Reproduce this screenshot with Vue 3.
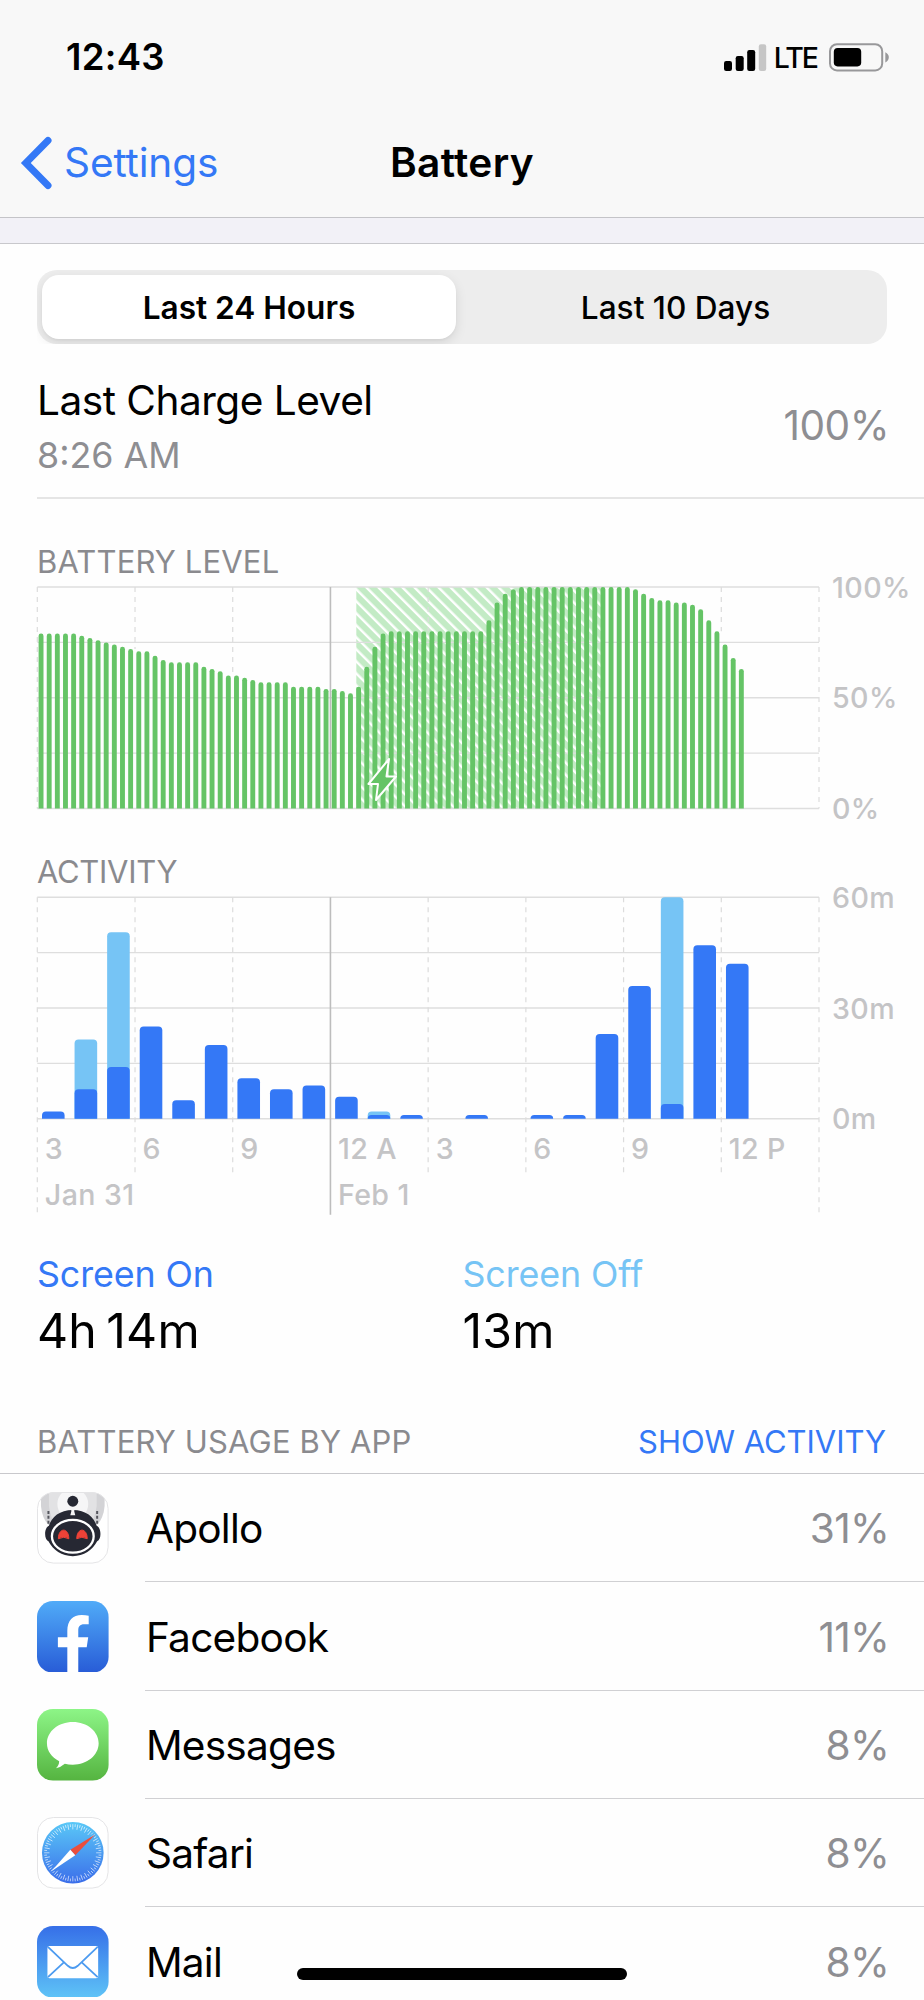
<script setup>
import { ref, computed } from 'vue'

const tabs = ['Last 24 Hours', 'Last 10 Days']
const activeTab = ref(0)

// battery percentage, one sample per quarter of an hour
const levels = [
  79, 79, 79, 79, 79, 78, 77, 76, 75, 74, 73, 72, 71, 71, 69, 67, 66, 66, 66, 66,
  64, 63, 62, 60, 60, 59, 58, 57, 57, 57, 57, 55, 55, 55, 55, 54, 54, 53, 52, 55,
  64, 73, 79, 80, 80, 80, 80, 80, 80, 80, 80, 80, 80, 80, 80, 85, 93, 97, 99, 100,
  100, 100, 100, 100, 100, 100, 100, 100, 100, 100, 100, 100, 100, 99, 97, 95, 94, 94, 93, 93,
  92, 90, 85, 80, 74, 68, 63,
]

// minutes per hour
const activity = [
  { on: 2, off: 0 }, { on: 8, off: 13.5 }, { on: 14, off: 36.5 }, { on: 25, off: 0 },
  { on: 5, off: 0 }, { on: 20, off: 0 }, { on: 11, off: 0 }, { on: 8, off: 0 },
  { on: 9, off: 0 }, { on: 6, off: 0 }, { on: 1, off: 1 }, { on: 1, off: 0 },
  { on: 0, off: 0 }, { on: 1, off: 0 }, { on: 0, off: 0 }, { on: 1, off: 0 },
  { on: 1, off: 0 }, { on: 23, off: 0 }, { on: 36, off: 0 }, { on: 4, off: 56 },
  { on: 47, off: 0 }, { on: 42, off: 0 },
]

const left = 37.3
const right = 819
const step = (right - left) / 8
const plotHeight = 221.5

const hourLabels = ['3', '6', '9', '12 A', '3', '6', '9', '12 P']
const verticals = Array.from({ length: 9 }, (_, i) => left + i * step)
const horizontals = [0, 1, 2, 3, 4].map((i) => (i * plotHeight) / 4)

// dashed lines stop where the level bars begin, outer ones and midnight run through
function verticalEnd(i) {
  if (i === 0 || i === 3 || i === 8) return plotHeight
  return plotHeight * (1 - levels[i * 12 - 1] / 100)
}

// bar with a rounded top and a flat foot
function barPath(x, w, h, r) {
  const k = Math.min(r, h)
  const top = plotHeight - h
  return `M${x} ${plotHeight}V${top + k}Q${x} ${top} ${x + k} ${top}H${x + w - k}Q${x + w} ${top} ${x + w} ${top + k}V${plotHeight}Z`
}

const levelBars = computed(() =>
  levels.map((v, i) => barPath(38.6 + i * 8.143, 4.9, (v / 100) * plotHeight, 2.4))
)

const activityBars = computed(() =>
  activity.map((a, i) => {
    const x = 42 + i * 32.57
    return {
      total: a.off ? barPath(x, 22.6, ((a.on + a.off) / 60) * plotHeight, 4) : '',
      on: a.on ? barPath(x, 22.6, (a.on / 60) * plotHeight, 4) : '',
    }
  })
)

const apps = [
  { id: 'apollo', name: 'Apollo', share: '31%' },
  { id: 'facebook', name: 'Facebook', share: '11%' },
  { id: 'messages', name: 'Messages', share: '8%' },
  { id: 'safari', name: 'Safari', share: '8%' },
  { id: 'mail', name: 'Mail', share: '8%' },
]

const ticks = Array.from({ length: 72 }, (_, i) => i * 5)
</script>

<template>
  <div class="screen">
    <header>
      <div class="status">
        <span class="time">12:43</span>
        <div class="status-right">
          <svg class="signal" width="43" height="27" viewBox="0 0 43 27">
            <rect x="0" y="17" width="8" height="10" rx="2.2" />
            <rect x="11.7" y="12" width="8" height="15" rx="2.2" />
            <rect x="23.2" y="6" width="8" height="21" rx="2.2" />
            <rect x="34.8" y="0.3" width="7.4" height="26.7" rx="2.2" fill="#c6c6c6" />
          </svg>
          <span class="lte">LTE</span>
          <svg class="cell" width="61" height="29" viewBox="0 0 61 29">
            <rect x="1" y="1.2" width="52.2" height="26.2" rx="7" fill="none" stroke="#98989a" stroke-width="2" />
            <rect x="4.8" y="5" width="27.4" height="18.4" rx="3.8" />
            <path d="M56.3 9.3C61 11.5 61 17.3 56.3 19.5Z" fill="#98989a" />
          </svg>
        </div>
      </div>
      <nav>
        <button class="back">
          <svg width="32" height="54" viewBox="0 0 32 54">
            <path d="M28 4.500L5.800 27L28 49.500" fill="none" stroke="#3478f6" stroke-width="7" stroke-linecap="round" />
          </svg>
          <span>Settings</span>
        </button>
        <h1>Battery</h1>
      </nav>
    </header>
    <div class="gap"></div>

    <main>
      <div class="segmented">
        <button
          v-for="(tab, i) in tabs"
          :key="tab"
          :class="{ active: i === activeTab }"
          @click="activeTab = i"
        >{{ tab }}</button>
      </div>

      <section class="charge">
        <div>
          <p class="charge-title">Last Charge Level</p>
          <p class="charge-time">8:26 AM</p>
        </div>
        <span class="charge-value">100%</span>
      </section>

      <h2 class="level-title">BATTERY LEVEL</h2>
      <svg class="chart level-chart" width="924" height="272" viewBox="0 -6 924 272">
        <defs>
          <pattern id="hatch" width="8.500" height="8.500" patternUnits="userSpaceOnUse" patternTransform="translate(356.300 4) rotate(-45)">
            <rect width="8.500" height="8.500" fill="#c3ebc5" />
            <rect width="2.400" height="8.500" fill="#fff" />
          </pattern>
        </defs>
        <rect x="356.3" y="0" width="244.500" :height="plotHeight" fill="url(#hatch)" />
        <line v-for="y in horizontals" :key="y" :x1="left" :x2="right" :y1="y" :y2="y" class="grid" />
        <line
          v-for="(x, i) in verticals" :key="x"
          :x1="x" :x2="x" y1="0" :y2="verticalEnd(i)"
          :class="i === 3 ? 'midnight' : 'dashed'"
        />
        <path v-for="(d, i) in levelBars" :key="i" :d="d" fill="#65c466" />
        <path
          d="M389 172L368.500 197H378L376 213L396 189.500H386.500Z"
          fill="#65c466" stroke="#fff" stroke-width="2" stroke-linejoin="round"
        />
        <text x="832" y="10.5" class="axis">100%</text>
        <text x="832" y="121.3" class="axis">50%</text>
        <text x="832" y="232" class="axis">0%</text>
      </svg>

      <h2 class="activity-title">ACTIVITY</h2>
      <svg class="chart" width="924" height="356" viewBox="0 -6.300 924 356">
        <line v-for="y in horizontals" :key="y" :x1="left" :x2="right" :y1="y" :y2="y" class="grid" />
        <line
          v-for="(x, i) in verticals" :key="x"
          :x1="x" :x2="x" y1="0"
          :y2="i === 0 || i === 3 || i === 8 ? 317.5 : 276.5"
          :class="i === 3 ? 'midnight' : 'dashed'"
        />
        <g v-for="(bar, i) in activityBars" :key="i">
          <path :d="bar.total" fill="#76c4f5" />
          <path :d="bar.on" fill="#3478f6" />
        </g>
        <text v-for="(label, i) in hourLabels" :key="i" :x="verticals[i] + 7.5" y="261.900" class="axis">{{ label }}</text>
        <text :x="verticals[0] + 7.5" y="307.300" class="axis">Jan 31</text>
        <text :x="verticals[3] + 7.5" y="307.300" class="axis">Feb 1</text>
        <text x="832" y="10.5" class="axis">60m</text>
        <text x="832" y="121.3" class="axis">30m</text>
        <text x="832" y="232" class="axis">0m</text>
      </svg>

      <section class="totals">
        <div>
          <p class="total-label on">Screen On</p>
          <p class="total-value">4h 14m</p>
        </div>
        <div>
          <p class="total-label off">Screen Off</p>
          <p class="total-value">13m</p>
        </div>
      </section>

      <div class="usage-head">
        <h2>BATTERY USAGE BY APP</h2>
        <button>SHOW ACTIVITY</button>
      </div>

      <ul class="apps">
        <li v-for="app in apps" :key="app.id">
          <svg v-if="app.id === 'apollo'" class="icon" viewBox="0 0 72 72">
            <defs>
              <clipPath id="tile"><rect x="0.500" y="0.500" width="71" height="71" rx="16" /></clipPath>
            </defs>
            <rect x="0.500" y="0.500" width="71" height="71" rx="16" fill="#fff" />
            <g clip-path="url(#tile)">
              <path d="M4 0H68V14Q67 26 60.500 33H11.500Q5 26 4 14Z" fill="#d3d3d6" />
              <path d="M12 0H60V14Q58 30 50 36H22Q14 30 12 14Z" fill="#e2e2e4" />
              <circle cx="36" cy="12" r="15.500" fill="#f6f6f7" />
              <path d="M11.500 19V34M60.500 19V34" stroke="#55565e" stroke-width="2" stroke-dasharray="3 2" />
            </g>
            <circle cx="36" cy="9.300" r="5.500" fill="#262833" />
            <path d="M36 18C49 18 57.500 25 60 34C65 36 65 48 60.500 49.500C56 58 47 64.500 36 64.500S16 58 11.500 49.500C7 48 7 36 12 34C14.500 25 23 18 36 18Z" fill="#262833" />
            <path d="M34.500 17H37.500V19.500L38.500 23.500H33.500L34.500 19.500Z" fill="#f6f6f7" />
            <ellipse cx="36" cy="44.500" rx="21" ry="16.500" fill="#262833" stroke="#fff" stroke-width="2.300" />
            <path d="M21.500 47C21.500 35.500 32 35.500 32 47Q27 44 21.500 47Z" fill="#ee4237" stroke="#ee4237" />
            <path d="M40 47C40 35.500 50.500 35.500 50.500 47Q45 44 40 47Z" fill="#ee4237" stroke="#ee4237" />
            <rect x="0.500" y="0.500" width="71" height="71" rx="16" fill="none" stroke="#e4e4e6" />
          </svg>

          <svg v-else-if="app.id === 'facebook'" class="icon" viewBox="0 0 72 72">
            <defs>
              <linearGradient id="fb" x2="0" y2="1">
                <stop offset="0" stop-color="#50abf8" />
                <stop offset="1" stop-color="#285cd7" />
              </linearGradient>
            </defs>
            <rect width="72" height="72" rx="16" fill="url(#fb)" />
            <path d="M30.500 72V46.500H21V36.500H30.500V30C30.500 19.500 36 14 45 14Q49 14 52 14.800V23.500H47.500C43 23.500 41.500 26 41.500 29.500V36.500H51.500L50 46.500H41.500V72Z" fill="#fff" />
          </svg>

          <svg v-else-if="app.id === 'messages'" class="icon" viewBox="0 0 72 72">
            <defs>
              <linearGradient id="msg" x2="0" y2="1">
                <stop offset="0" stop-color="#8df587" />
                <stop offset="1" stop-color="#55b440" />
              </linearGradient>
            </defs>
            <rect width="72" height="72" rx="16" fill="url(#msg)" />
            <path d="M36 13C50.500 13 62 22.500 62 34.500S50.500 56 36 56Q31.500 56 28 55Q24 58.500 19 59.500Q22.300 56.500 22.300 52.500C14.500 48.500 10 42 10 34.500C10 22.500 21.500 13 36 13Z" fill="#fff" />
          </svg>

          <svg v-else-if="app.id === 'safari'" class="icon" viewBox="0 0 72 72">
            <defs>
              <linearGradient id="saf" x2="0" y2="1">
                <stop offset="0" stop-color="#5ac8f7" />
                <stop offset="1" stop-color="#3b6eea" />
              </linearGradient>
            </defs>
            <rect x="0.500" y="0.500" width="71" height="71" rx="16" fill="#fff" stroke="#e4e4e6" />
            <circle cx="36" cy="36" r="31" fill="url(#saf)" />
            <line
              v-for="(a, i) in ticks" :key="a"
              x1="36" y1="7.200" x2="36" :y2="i % 2 ? 10 : 12.500"
              :transform="`rotate(${a} 36 36)`"
              stroke="#fff" stroke-opacity="0.750" stroke-width="0.800"
            />
            <path d="M58.500 17.500L33.500 33L38.500 38.500Z" fill="#ea4e3d" />
            <path d="M14.500 54.500L33.500 33L38.500 38.500Z" fill="#fff" />
          </svg>

          <svg v-else class="icon" viewBox="0 0 72 72">
            <defs>
              <linearGradient id="mail" x2="0" y2="1">
                <stop offset="0" stop-color="#366fe8" />
                <stop offset="1" stop-color="#5ec3f7" />
              </linearGradient>
            </defs>
            <rect width="72" height="72" rx="16" fill="url(#mail)" />
            <rect x="10.500" y="20" width="51" height="32.500" rx="2" fill="#fff" />
            <path d="M11 21L31 40Q36 44.500 41 40L61 21M11 51.500L27 36.500M61 51.500L45 36.500" fill="none" stroke="#4c9bf0" stroke-width="1.800" />
          </svg>

          <div class="row">
            <span class="name">{{ app.name }}</span>
            <span class="share">{{ app.share }}</span>
          </div>
        </li>
      </ul>
    </main>
    <div class="home-bar"></div>
  </div>
</template>

<style>
body {
  margin: 0;
  background: #fefefe;
}
</style>

<style scoped>
.screen {
  position: relative;
  width: 924px;
  height: 2000px;
  overflow: hidden;
  background: #fefefe;
  color: #000;
  font-family: Inter, "Liberation Sans", sans-serif;
}
p, h1, h2, ul {
  margin: 0;
  padding: 0;
}
button {
  border: none;
  background: none;
  padding: 0;
  font: inherit;
  color: inherit;
  cursor: pointer;
}
header {
  height: 217px;
  background: #f8f8f8;
  border-bottom: 1px solid #c4c4c8;
}
.status {
  display: flex;
  justify-content: space-between;
  align-items: center;
  height: 114px;
  padding: 0 34px 0 66px;
}
.time {
  font-size: 36.5px;
  font-weight: 600;
  letter-spacing: 0.3px;
}
.status-right {
  display: flex;
  align-items: center;
}
.lte {
  margin: 0 12px 0 7px;
  font-size: 28.5px;
  font-weight: 500;
  letter-spacing: -2px;
}
nav {
  display: grid;
  grid-template-columns: 1fr auto 1fr;
  align-items: center;
  height: 97px;
  padding: 0 20px;
}
.back {
  display: flex;
  align-items: center;
  gap: 12px;
  color: #3478f6;
  font-size: 40.6px;
  letter-spacing: -0.15px;
}
h1 {
  font-size: 40.6px;
  font-weight: 600;
  letter-spacing: 0.35px;
}
nav::after {
  content: "";
}
.gap {
  height: 25px;
  background: #f2f1f7;
  border-bottom: 1px solid #c8c8cc;
}
.segmented {
  display: grid;
  grid-template-columns: 414px 1fr;
  column-gap: 13px;
  height: 64px;
  margin: 26px 37px 0;
  padding: 5px;
  border-radius: 20px;
  background: #ededed;
}
.segmented button {
  border-radius: 17px;
  font-size: 31.6px;
  font-weight: 500;
}
.segmented .active {
  background: #fff;
  font-weight: 600;
  box-shadow: 0 4px 12px rgba(0, 0, 0, 0.1), 0 2px 2px rgba(0, 0, 0, 0.03);
  clip-path: inset(-5px -20px -5px -5px);
}
.charge {
  display: flex;
  justify-content: space-between;
  align-items: center;
  height: 140px;
  margin-left: 37px;
  padding: 13px 35px 0 0;
  border-bottom: 2px solid #e5e5e5;
}
.charge p {
  line-height: 54px;
}
.charge-title {
  padding-top: 1px;
  font-size: 40.6px;
  letter-spacing: -0.5px;
}
.charge-time {
  font-size: 35.8px;
  color: #8e8e92;
}
.charge-value {
  margin-bottom: 3px;
  font-size: 40.6px;
  letter-spacing: -0.5px;
  color: #8e8e92;
}
h2 {
  margin-left: 37px;
  font-size: 31px;
  font-weight: 400;
  line-height: 38px;
  letter-spacing: 0.15px;
  color: #8a8a8e;
}
.level-title {
  margin-top: 44px;
}
.activity-title {
  letter-spacing: -0.3px;
}
.chart {
  display: block;
  overflow: visible;
}
.grid {
  stroke: #dedede;
  stroke-width: 1.4;
}
.dashed {
  stroke: #dcdcdc;
  stroke-width: 1.2;
  stroke-dasharray: 5 5;
}
.midnight {
  stroke: #bdbdbd;
  stroke-width: 1.6;
}
.axis {
  font-size: 28.6px;
  font-weight: 500;
  letter-spacing: 0.4px;
  fill: #c4c4c6;
}
.totals {
  display: grid;
  grid-template-columns: 425.5px 1fr;
  padding-left: 37px;
}
.total-label {
  font-size: 35.8px;
  line-height: 55px;
  letter-spacing: -0.1px;
}
.total-label.on {
  color: #3478f6;
}
.total-label.off {
  color: #76c4f5;
}
.total-value {
  font-size: 48.2px;
  line-height: 57px;
  letter-spacing: 0.2px;
  word-spacing: -4.5px;
}
.usage-head {
  display: flex;
  justify-content: space-between;
  align-items: flex-end;
  height: 102px;
  padding: 0 38px 12px 0;
  border-bottom: 1px solid #c8c8cc;
}
.usage-head button {
  font-size: 31px;
  line-height: 38px;
  letter-spacing: -0.05px;
  color: #3478f6;
}
.apps {
  list-style: none;
}
.apps li {
  display: flex;
  align-items: center;
  height: 108.35px;
  padding-left: 37px;
}
.icon {
  flex: none;
  width: 71.6px;
  height: 71.6px;
}
.row {
  display: flex;
  flex: 1;
  justify-content: space-between;
  align-items: center;
  box-sizing: border-box;
  height: 100%;
  margin-left: 36.8px;
  padding: 2px 35px 0 0.5px;
  border-bottom: 1px solid #d0d0d3;
  font-size: 40.6px;
  letter-spacing: -0.75px;
}
.share {
  color: #8e8e92;
}
/* floats over the list like the system home indicator */
.home-bar {
  position: absolute;
  left: 297px;
  top: 1968px;
  width: 330px;
  height: 12px;
  border-radius: 6px;
  background: #000;
}
</style>
